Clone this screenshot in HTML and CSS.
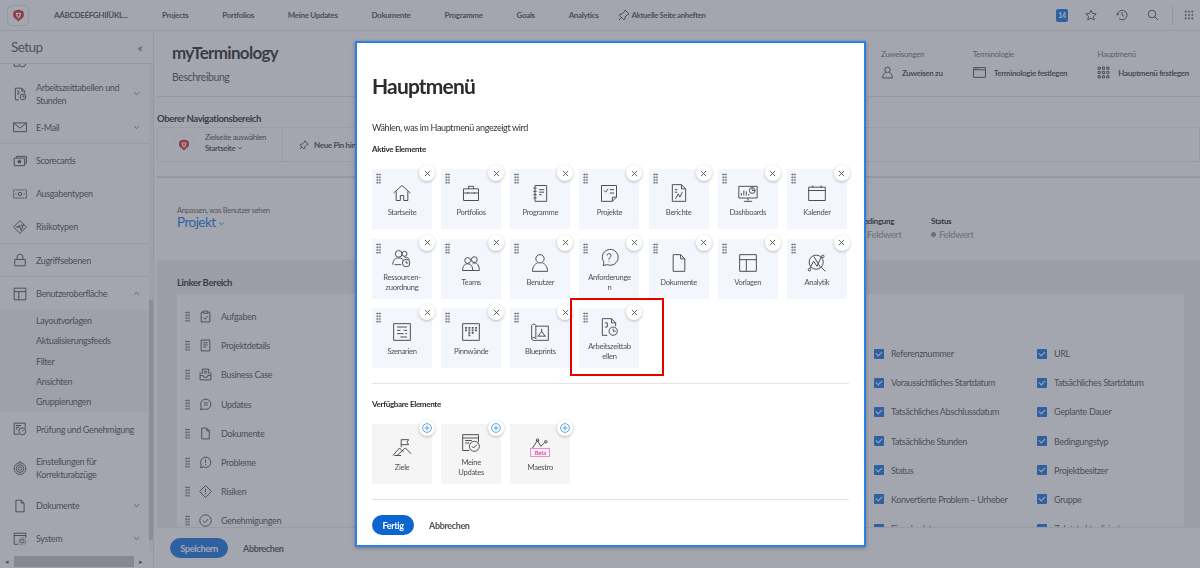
FILE: index.html
```html
<!DOCTYPE html>
<html lang="de">
<head>
    <meta charset="UTF-8">
    <meta name="viewport" content="width=device-width, initial-scale=1.0">
    <title>myTerminology</title>
    <link rel="stylesheet" href="styles.css">
</head>
<body>
    <svg class="defs" aria-hidden="true">
        <symbol id="i-logo" viewBox="0 0 24 24"><path fill="#e0242c" stroke="none" d="M12 1l9 3 1 7c0 4-3 6-6 8l-4 4-4-4c-3-2-6-4-6-8l1-7z"/><path fill="#fff" stroke="none" d="M7 7h10l-1 6-4 5-4-5z"/><path fill="#e0242c" stroke="none" d="M10 9h4l-1 5h-2z"/></symbol>
        <symbol id="i-home" viewBox="0 0 24 24"><path d="M2 12L12 3l10 9M5 10v11h5v-6h4v6h5V10"/></symbol>
        <symbol id="i-case" viewBox="0 0 24 24"><path d="M3 7h18v14H3zM9 7V4h6v3M3 12h18M8 11v2M16 11v2"/></symbol>
        <symbol id="i-book" viewBox="0 0 24 24"><path d="M6 3h14v19H6zM4 6h4M4 10h4M4 14h4M4 18h4M11 8h6M11 11h6M11 14h3"/></symbol>
        <symbol id="i-check" viewBox="0 0 24 24"><path d="M3 3h18v14l-5 5H3zM16 22v-5h5M6 9l2 2 3-4M13 8h5M13 12h5"/></symbol>
        <symbol id="i-report" viewBox="0 0 24 24"><path d="M4 2h11l5 5v15H4zM15 2v5h5M7 8h3M7 11h3M8 19l3-6 2 4 3-6"/></symbol>
        <symbol id="i-dash" viewBox="0 0 24 24"><path d="M1 4h22v14H1zM12 18v3M7 22h10M4 15v-3M7 15V9M10 15v-5M13 15v-2"/><circle cx="17" cy="9" r="3.5"/><path d="M17 9V5.500M17 9h3.500"/></symbol>
        <symbol id="i-cal" viewBox="0 0 24 24"><path d="M2 5h20v16H2zM2 9h20M7 3v3M17 3v3"/></symbol>
        <symbol id="i-res" viewBox="0 0 24 24"><circle cx="8" cy="7" r="4"/><circle cx="15" cy="7" r="3"/><path d="M1 20c0-6 3-8 7-8s5 1 5 3M3 20h8M15 11c3 0 5 1 6 3"/><circle cx="17" cy="18" r="4.500"/><path d="M17 15.500V18h2.500"/></symbol>
        <symbol id="i-teams" viewBox="0 0 24 24"><circle cx="8" cy="9" r="3.500"/><circle cx="16" cy="8" r="3.500"/><path d="M2 21c0-5 2-8 6-8s6 3 6 8zM14 13c1-1 1-1 2-1 4 0 6 3 6 9h-8"/></symbol>
        <symbol id="i-user" viewBox="0 0 24 24"><circle cx="12" cy="7" r="5"/><path d="M3 22c0-6 3-9 6-10M21 22c0-6-3-9-6-10M3 22h18"/></symbol>
        <symbol id="i-ask" viewBox="0 0 24 24"><path d="M5 21l1-4a9.500 9.500 0 1 1 4 3z"/><path d="M9.500 9a2.500 2.500 0 1 1 3.500 2.500c-1 .5-1 1-1 2.500M12 16v1"/></symbol>
        <symbol id="i-doc" viewBox="0 0 24 24"><path d="M5 2h9l5 5v15H5zM14 2v5h5"/></symbol>
        <symbol id="i-tpl" viewBox="0 0 24 24"><path d="M2 2h20v20H2zM2 8h20M10 8v14"/></symbol>
        <symbol id="i-ana" viewBox="0 0 24 24"><circle cx="11" cy="11" r="8.500"/><path d="M17 17l5 5M3 19l5-9 4 6 5-11"/><circle cx="3" cy="20" r="1.500"/><circle cx="19" cy="4" r="1.500"/><path d="M8 4l8 13"/></symbol>
        <symbol id="i-scn" viewBox="0 0 24 24"><path d="M2 2h20v20H2zM6 6h12M14 10h4M6 10h4M6 14h8M16 14h2M10 18h8"/></symbol>
        <symbol id="i-board" viewBox="0 0 24 24"><path d="M2 2h20v20H2z"/><path stroke-width="2.200" stroke-dasharray="2 1" d="M6 6v5M10 6v11M14 6v8M18 6v5"/></symbol>
        <symbol id="i-blue" viewBox="0 0 24 24"><path d="M2 4c1-2 4-2 5 0v16c-1-2-4-2-5 0zM7 5h15v17H5c-2 0-3-1-3-2M14 8v3M14 11l-4 6M14 11l4 6M9 17h10"/></symbol>
        <symbol id="i-time" viewBox="0 0 24 24"><path d="M4 2h11l5 5v4M15 2v5h5M10 22H4V2M7 7h3v5H7"/><circle cx="17" cy="17" r="5"/><path d="M17 14v3h3"/></symbol>
        <symbol id="i-goal" viewBox="0 0 24 24"><path d="M11 11V2h9l-2 3 2 3h-9M1 21l8-9 5 5M6 21l10-9 7 7M3 21h8"/></symbol>
        <symbol id="i-upd" viewBox="0 0 24 24"><path d="M10 21H2V2h19v9M2 6h19M5 9h8M5 12h5"/><circle cx="16" cy="16" r="6"/><path d="M13 16l2 2 4-4"/></symbol>
        <symbol id="i-mail" viewBox="0 0 24 24"><path d="M1 5h22v15H1zM1 5l11 9 11-9"/></symbol>
        <symbol id="i-score" viewBox="0 0 24 24"><path d="M6 7V4h17v12h-3M2 7h18v13H2z"/><path fill="currentColor" d="M11 10l1 2h2l-1.500 1.500.5 2-2-1-2 1 .5-2L8 12h2z"/></symbol>
        <symbol id="i-money" viewBox="0 0 24 24"><path stroke-dasharray="3 1" d="M1 5h22v14H1z"/><circle cx="12" cy="12" r="3"/><path d="M4 12h2M18 12h2"/></symbol>
        <symbol id="i-risk" viewBox="0 0 24 24"><path d="M12 1l11 11-11 11L1 12zM6 12l12-4-4 10-2-6z"/></symbol>
        <symbol id="i-lock" viewBox="0 0 24 24"><path d="M3 11h18v11H3zM7 11V7a5 5 0 0 1 10 0v4"/></symbol>
        <symbol id="i-review" viewBox="0 0 24 24"><path d="M10 21H2V2h19v8M5 6h9M5 9h6M5 12h3"/><circle cx="16" cy="16" r="6"/><path d="M16 16l3-3"/></symbol>
        <symbol id="i-target" viewBox="0 0 24 24"><circle cx="12" cy="13" r="10"/><circle cx="12" cy="13" r="6.500"/><circle cx="12" cy="13" r="3"/><path d="M12 3V0"/></symbol>
        <symbol id="i-sys" viewBox="0 0 24 24"><path d="M9 21H2V2h20v8M2 6h20"/><circle cx="16" cy="16" r="3"/><circle stroke-dasharray="2 2" cx="16" cy="16" r="6"/></symbol>
        <symbol id="i-task" viewBox="0 0 24 24"><path d="M8 4H4v18h16V4h-4M8 2h8v4H8zM8 14l3 3 5-6"/></symbol>
        <symbol id="i-det" viewBox="0 0 24 24"><path d="M4 2h16v20H4zM8 7h8M8 11h8M8 15h5"/></symbol>
        <symbol id="i-biz" viewBox="0 0 24 24"><path d="M2 8v14h20V8M2 14h6l1 3h6l1-3h6M6 11V2h12v9M9 6h6M9 9h6"/></symbol>
        <symbol id="i-chat" viewBox="0 0 24 24"><path d="M3 22l1-6a9.500 9.500 0 1 1 4 4zM9 9h7M9 13h7"/></symbol>
        <symbol id="i-issue" viewBox="0 0 24 24"><path d="M3 22l1-6a9.500 9.500 0 1 1 4 4zM12 6v7M12 15v2"/></symbol>
        <symbol id="i-warn" viewBox="0 0 24 24"><path d="M12 1l11 11-11 11L1 12zM12 7v6M12 15v2"/></symbol>
        <symbol id="i-ok" viewBox="0 0 24 24"><circle cx="12" cy="12" r="10.500"/><path d="M7 12l4 4 6-7"/></symbol>
        <symbol id="i-term" viewBox="0 0 24 24"><path d="M1 3h22v18H1zM1 7h22M4 5h2M8 5h2"/></symbol>
        <symbol id="i-grid" viewBox="0 0 24 24"><path d="M2 2h4v4H2zM10 2h4v4h-4zM18 2h4v4h-4zM2 10h4v4H2zM10 10h4v4h-4zM18 10h4v4h-4zM2 18h4v4H2zM10 18h4v4h-4zM18 18h4v4h-4z"/></symbol>
        <symbol id="i-dots" viewBox="0 0 24 24"><path fill="currentColor" stroke="none" d="M2 2h4v4H2zM10 2h4v4h-4zM18 2h4v4h-4zM2 10h4v4H2zM10 10h4v4h-4zM18 10h4v4h-4zM2 18h4v4H2zM10 18h4v4h-4zM18 18h4v4h-4z"/></symbol>
        <symbol id="i-pin" viewBox="0 0 24 24"><path d="M14 2l8 8-3 1-5 5 0 4-3 1-8-8 1-3 4 0 5-5zM7 17l-5 5"/></symbol>
        <symbol id="i-star" viewBox="0 0 24 24"><path d="M12 2l3 7 7.500.7-5.700 5 1.700 7.300-6.500-3.800L5.500 22l1.700-7.300-5.700-5L9 9z"/></symbol>
        <symbol id="i-hist" viewBox="0 0 24 24"><path d="M3 12a9.500 9.500 0 1 1 3 7M1 9l2 3 3-2M12 6v6l4 3"/></symbol>
        <symbol id="i-find" viewBox="0 0 24 24"><circle cx="10" cy="10" r="7.500"/><path d="M15.500 15.500L22 22"/></symbol>
        <symbol id="i-down" viewBox="0 0 24 24"><path d="M4 8l8 8 8-8"/></symbol>
        <symbol id="i-up" viewBox="0 0 24 24"><path d="M4 16l8-8 8 8"/></symbol>
        <symbol id="i-x" viewBox="0 0 24 24"><path d="M3 3l18 18M21 3L3 21"/></symbol>
        <symbol id="i-plus" viewBox="0 0 24 24"><circle cx="12" cy="12" r="10.500"/><path d="M12 6v12M6 12h12"/></symbol>
    </svg>

    <header class="topnav">
        <div class="logo-box"><svg class="ico ico-13"><use href="#i-logo"/></svg></div>
        <span class="nav-link nav-alpha">AÁBCDEÉFGHIÍÜKL...</span>
        <nav class="nav-links">
            <a class="nav-link">Projects</a>
            <a class="nav-link">Portfolios</a>
            <a class="nav-link">Meine Updates</a>
            <a class="nav-link">Dokumente</a>
            <a class="nav-link">Programme</a>
            <a class="nav-link">Goals</a>
            <a class="nav-link">Analytics</a>
        </nav>
        <span class="nav-pin"><svg class="ico ico-12"><use href="#i-pin"/></svg>Aktuelle Seite anheften</span>
        <div class="nav-tools">
            <span class="badge">14</span>
            <svg class="ico ico-12"><use href="#i-star"/></svg>
            <svg class="ico ico-12"><use href="#i-hist"/></svg>
            <svg class="ico ico-12"><use href="#i-find"/></svg>
            <span class="tool-sep"></span>
            <svg class="ico ico-10"><use href="#i-dots"/></svg>
        </div>
    </header>

    <div class="page">
        <aside class="sidebar">
            <div class="side-head"><span>Setup</span><span class="collapse">«</span></div>
            <div class="side-body">
                <div class="side-list">
                    <div class="side-item item-cut"><svg class="ico ico-14"><use href="#i-review"/></svg></div>
                    <div class="side-item item-tall"><svg class="ico ico-14"><use href="#i-time"/></svg><span>Arbeitszeittabellen und Stunden</span><svg class="ico ico-7 caret"><use href="#i-down"/></svg></div>
                    <div class="side-item item-line"><svg class="ico ico-14"><use href="#i-mail"/></svg><span>E-Mail</span><svg class="ico ico-7 caret"><use href="#i-down"/></svg></div>
                    <div class="side-item"><svg class="ico ico-14"><use href="#i-score"/></svg><span>Scorecards</span></div>
                    <div class="side-item"><svg class="ico ico-14"><use href="#i-money"/></svg><span>Ausgabentypen</span></div>
                    <div class="side-item item-line item-risk"><svg class="ico ico-14"><use href="#i-risk"/></svg><span>Risikotypen</span></div>
                    <div class="side-item item-line"><svg class="ico ico-14"><use href="#i-lock"/></svg><span>Zugriffsebenen</span></div>
                    <div class="side-item"><svg class="ico ico-14"><use href="#i-tpl"/></svg><span>Benutzeroberfläche</span><svg class="ico ico-7 caret"><use href="#i-up"/></svg></div>
                    <div class="side-sub">
                        <a>Layoutvorlagen</a>
                        <a>Aktualisierungsfeeds</a>
                        <a>Filter</a>
                        <a>Ansichten</a>
                        <a>Gruppierungen</a>
                    </div>
                    <div class="side-item item-review"><svg class="ico ico-14"><use href="#i-review"/></svg><span>Prüfung und Genehmigung</span></div>
                    <div class="side-item item-proof"><svg class="ico ico-14"><use href="#i-target"/></svg><span>Einstellungen für Korrekturabzüge</span></div>
                    <div class="side-item"><svg class="ico ico-14"><use href="#i-doc"/></svg><span>Dokumente</span><svg class="ico ico-7 caret"><use href="#i-down"/></svg></div>
                    <div class="side-item"><svg class="ico ico-14"><use href="#i-sys"/></svg><span>System</span><svg class="ico ico-7 caret"><use href="#i-down"/></svg></div>
                </div>
                <div class="vbar"><span class="vthumb"></span></div>
            </div>
            <div class="hbar"><span class="harrow">◂</span><span class="hthumb"></span><span class="harrow arrow-right">▸</span></div>
        </aside>

        <main class="main">
            <div class="scroll">
                <section class="head">
                    <div>
                        <h1>myTerminology</h1>
                        <p class="head-sub">Beschreibung</p>
                    </div>
                    <div class="head-actions">
                        <div class="action">
                            <span class="action-label">Zuweisungen</span>
                            <span class="action-btn"><svg class="ico ico-13"><use href="#i-user"/></svg>Zuweisen zu</span>
                        </div>
                        <div class="action">
                            <span class="action-label">Terminologie</span>
                            <span class="action-btn"><svg class="ico ico-13"><use href="#i-term"/></svg>Terminologie festlegen</span>
                        </div>
                        <div class="action">
                            <span class="action-label">Hauptmenü</span>
                            <span class="action-btn"><svg class="ico ico-13"><use href="#i-grid"/></svg>Hauptmenü festlegen</span>
                        </div>
                    </div>
                </section>

                <h2 class="top-title">Oberer Navigationsbereich</h2>
                <section class="pin-bar">
                    <div class="pin-start">
                        <div class="logo-soft"><svg class="ico ico-12"><use href="#i-logo"/></svg></div>
                        <div class="pin-text">
                            <span>Zielseite auswählen</span>
                            <b>Startseite <svg class="ico ico-6"><use href="#i-down"/></svg></b>
                        </div>
                    </div>
                    <div class="pin-add"><svg class="ico ico-10"><use href="#i-pin"/></svg>Neue Pin hinzufügen</div>
                </section>

                <section class="object-bar">
                    <div>
                        <span class="object-label">Anpassen, was Benutzer sehen</span>
                        <div class="object-name">Projekt <svg class="ico ico-7"><use href="#i-down"/></svg></div>
                    </div>
                    <div class="fields">
                        <div class="field"><b>Bedingung</b><span><i class="dot"></i>Feldwert</span></div>
                        <div class="field"><b>Status</b><span><i class="dot"></i>Feldwert</span></div>
                    </div>
                </section>

                <section class="left-area">
                    <h2>Linker Bereich</h2>
                    <div class="area-panel">
                        <ul class="area-list">
                            <li><i class="grip"></i><svg class="ico ico-13"><use href="#i-task"/></svg>Aufgaben</li>
                            <li><i class="grip"></i><svg class="ico ico-13"><use href="#i-det"/></svg>Projektdetails</li>
                            <li><i class="grip"></i><svg class="ico ico-13"><use href="#i-biz"/></svg>Business Case</li>
                            <li><i class="grip"></i><svg class="ico ico-13"><use href="#i-chat"/></svg>Updates</li>
                            <li><i class="grip"></i><svg class="ico ico-13"><use href="#i-doc"/></svg>Dokumente</li>
                            <li><i class="grip"></i><svg class="ico ico-13"><use href="#i-issue"/></svg>Probleme</li>
                            <li><i class="grip"></i><svg class="ico ico-13"><use href="#i-warn"/></svg>Risiken</li>
                            <li><i class="grip"></i><svg class="ico ico-13"><use href="#i-ok"/></svg>Genehmigungen</li>
                        </ul>
                        <div class="check-grid">
                            <label><i class="box"></i>Referenznummer</label>
                            <label><i class="box"></i>URL</label>
                            <label><i class="box"></i>Voraussichtliches Startdatum</label>
                            <label><i class="box"></i>Tatsächliches Startdatum</label>
                            <label><i class="box"></i>Tatsächliches Abschlussdatum</label>
                            <label><i class="box"></i>Geplante Dauer</label>
                            <label><i class="box"></i>Tatsächliche Stunden</label>
                            <label><i class="box"></i>Bedingungstyp</label>
                            <label><i class="box"></i>Status</label>
                            <label><i class="box"></i>Projektbesitzer</label>
                            <label><i class="box"></i>Konvertierte Problem – Urheber</label>
                            <label><i class="box"></i>Gruppe</label>
                            <label><i class="box"></i>Eingabedatum</label>
                            <label><i class="box"></i>Zuletzt aktualisiert von</label>
                        </div>
                    </div>
                </section>
            </div>
            <footer class="save-bar">
                <button class="btn-save">Speichern</button>
                <button class="btn-link">Abbrechen</button>
            </footer>
        </main>
    </div>

    <div class="overlay">
        <div class="modal">
            <h2 class="modal-title">Hauptmenü</h2>
            <p class="modal-desc">Wählen, was im Hauptmenü angezeigt wird</p>
            <h3 class="modal-sub">Aktive Elemente</h3>
            <div class="tiles">
                <div class="tile"><i class="grip"></i><span class="tile-x"><svg class="ico ico-7"><use href="#i-x"/></svg></span><svg class="ico ico-20"><use href="#i-home"/></svg><span class="tile-name">Startseite</span></div>
                <div class="tile"><i class="grip"></i><span class="tile-x"><svg class="ico ico-7"><use href="#i-x"/></svg></span><svg class="ico ico-20"><use href="#i-case"/></svg><span class="tile-name">Portfolios</span></div>
                <div class="tile"><i class="grip"></i><span class="tile-x"><svg class="ico ico-7"><use href="#i-x"/></svg></span><svg class="ico ico-20"><use href="#i-book"/></svg><span class="tile-name">Programme</span></div>
                <div class="tile"><i class="grip"></i><span class="tile-x"><svg class="ico ico-7"><use href="#i-x"/></svg></span><svg class="ico ico-20"><use href="#i-check"/></svg><span class="tile-name">Projekte</span></div>
                <div class="tile"><i class="grip"></i><span class="tile-x"><svg class="ico ico-7"><use href="#i-x"/></svg></span><svg class="ico ico-20"><use href="#i-report"/></svg><span class="tile-name">Berichte</span></div>
                <div class="tile"><i class="grip"></i><span class="tile-x"><svg class="ico ico-7"><use href="#i-x"/></svg></span><svg class="ico ico-20"><use href="#i-dash"/></svg><span class="tile-name">Dashboards</span></div>
                <div class="tile"><i class="grip"></i><span class="tile-x"><svg class="ico ico-7"><use href="#i-x"/></svg></span><svg class="ico ico-20"><use href="#i-cal"/></svg><span class="tile-name">Kalender</span></div>

                <div class="tile"><i class="grip"></i><span class="tile-x"><svg class="ico ico-7"><use href="#i-x"/></svg></span><svg class="ico ico-20"><use href="#i-res"/></svg><span class="tile-name">Ressourcen-<br>zuordnung</span></div>
                <div class="tile"><i class="grip"></i><span class="tile-x"><svg class="ico ico-7"><use href="#i-x"/></svg></span><svg class="ico ico-20"><use href="#i-teams"/></svg><span class="tile-name">Teams</span></div>
                <div class="tile"><i class="grip"></i><span class="tile-x"><svg class="ico ico-7"><use href="#i-x"/></svg></span><svg class="ico ico-20"><use href="#i-user"/></svg><span class="tile-name">Benutzer</span></div>
                <div class="tile"><i class="grip"></i><span class="tile-x"><svg class="ico ico-7"><use href="#i-x"/></svg></span><svg class="ico ico-20"><use href="#i-ask"/></svg><span class="tile-name">Anforderunge<br>n</span></div>
                <div class="tile"><i class="grip"></i><span class="tile-x"><svg class="ico ico-7"><use href="#i-x"/></svg></span><svg class="ico ico-20"><use href="#i-doc"/></svg><span class="tile-name">Dokumente</span></div>
                <div class="tile"><i class="grip"></i><span class="tile-x"><svg class="ico ico-7"><use href="#i-x"/></svg></span><svg class="ico ico-20"><use href="#i-tpl"/></svg><span class="tile-name">Vorlagen</span></div>
                <div class="tile"><i class="grip"></i><span class="tile-x"><svg class="ico ico-7"><use href="#i-x"/></svg></span><svg class="ico ico-20"><use href="#i-ana"/></svg><span class="tile-name">Analytik</span></div>

                <div class="tile"><i class="grip"></i><span class="tile-x"><svg class="ico ico-7"><use href="#i-x"/></svg></span><svg class="ico ico-20"><use href="#i-scn"/></svg><span class="tile-name">Szenarien</span></div>
                <div class="tile"><i class="grip"></i><span class="tile-x"><svg class="ico ico-7"><use href="#i-x"/></svg></span><svg class="ico ico-20"><use href="#i-board"/></svg><span class="tile-name">Pinnwände</span></div>
                <div class="tile"><i class="grip"></i><span class="tile-x"><svg class="ico ico-7"><use href="#i-x"/></svg></span><svg class="ico ico-20"><use href="#i-blue"/></svg><span class="tile-name">Blueprints</span></div>
                <div class="tile tile-marked"><i class="grip"></i><span class="tile-x"><svg class="ico ico-7"><use href="#i-x"/></svg></span><svg class="ico ico-20"><use href="#i-time"/></svg><span class="tile-name">Arbeitszeittab<br>ellen</span></div>
            </div>
            <hr class="modal-line">
            <h3 class="modal-sub sub-free">Verfügbare Elemente</h3>
            <div class="tiles">
                <div class="tile tile-free"><span class="tile-x"><svg class="ico ico-10 plus"><use href="#i-plus"/></svg></span><svg class="ico ico-20"><use href="#i-goal"/></svg><span class="tile-name">Ziele</span></div>
                <div class="tile tile-free"><span class="tile-x"><svg class="ico ico-10 plus"><use href="#i-plus"/></svg></span><svg class="ico ico-20"><use href="#i-upd"/></svg><span class="tile-name">Meine<br>Updates</span></div>
                <div class="tile tile-free"><span class="tile-x"><svg class="ico ico-10 plus"><use href="#i-plus"/></svg></span>
                    <div class="maestro"><svg class="ico maestro-ico" viewBox="0 0 24 12"><path d="M3 12l6-9 4 7 5-5"/><circle cx="9" cy="2.500" r="1.500"/><circle cx="19" cy="4.500" r="1.500"/></svg><span class="beta">Beta</span></div>
                    <span class="tile-name">Maestro</span></div>
            </div>
            <hr class="modal-line">
            <div class="modal-foot">
                <button class="btn-done">Fertig</button>
                <button class="btn-link">Abbrechen</button>
            </div>
        </div>
    </div>
</body>
</html>
```

FILE: styles.css
```css
*, *::after {
    box-sizing: border-box;
}

/* Lato runs wide next to the original face, so pull every text in a bit */
* {
    letter-spacing: -0.04em;
}

html, body {
    margin: 0;
    height: 100%;
    overflow: hidden;
}

body {
    font-family: Lato, "Open Sans", sans-serif;
    color: #4b4b4b;
    background: #fff;
    display: flex;
    flex-direction: column;
}

h1, h2, h3, p, ul {
    margin: 0;
    padding: 0;
}

i {
    font-style: normal;
}

.defs {
    display: none;
}

.ico {
    fill: none;
    stroke: currentColor;
    flex: none;
}

.ico-6 { width: 6px; height: 6px; stroke-width: 3.500; }
.ico-7 { width: 7px; height: 7px; stroke-width: 3; }
.ico-10 { width: 10px; height: 10px; stroke-width: 2.200; }
.ico-12 { width: 12px; height: 12px; stroke-width: 2; }
.ico-13 { width: 13px; height: 13px; stroke-width: 1.800; }
.ico-14 { width: 14px; height: 14px; stroke-width: 1.700; }
.ico-20 { width: 20px; height: 20px; stroke-width: 1.200; }

/* top navigation */
.topnav {
    height: 31px;
    flex: none;
    display: flex;
    align-items: center;
    padding-left: 8px;
    background: #fff;
    border-bottom: 1px solid #e4e4e4;
}

.logo-box {
    width: 20px;
    height: 19px;
    display: flex;
    align-items: center;
    justify-content: center;
    border-radius: 4px;
    box-shadow: 0 0 2px rgba(0, 0, 0, 0.4);
}

.nav-link {
    font-size: 8px;
    font-weight: 700;
    color: #505050;
}

.nav-alpha {
    width: 108px;
    margin-left: 26px;
}

.nav-links {
    display: flex;
    gap: 33.800px;
}

.nav-pin {
    display: flex;
    align-items: center;
    gap: 1px;
    margin-left: 20px;
    font-size: 7.800px;
    font-weight: 700;
    color: #505050;
}

.nav-tools {
    margin-left: auto;
    display: flex;
    align-items: center;
    gap: 19px;
    padding-right: 6px;
    color: #555;
}

.badge {
    width: 12px;
    height: 13px;
    margin-right: -2px;
    border-radius: 2px;
    background: #1473e6;
    color: #fff;
    font-size: 7px;
    font-weight: 700;
    text-align: center;
    line-height: 13px;
}

.tool-sep {
    width: 1px;
    height: 20px;
    margin: 0 -8px 0 -6px;
    background: #e1e1e1;
}

.page {
    flex: 1;
    min-height: 0;
    display: flex;
}

/* setup sidebar */
.sidebar {
    width: 154px;
    flex: none;
    display: flex;
    flex-direction: column;
    background: #fff;
    border-right: 1px solid #e4e4e4;
}

.side-head {
    height: 33px;
    flex: none;
    display: flex;
    justify-content: space-between;
    align-items: center;
    padding: 0 11px 0 11px;
    font-size: 13.500px;
    color: #555;
    border-bottom: 1px solid #e4e4e4;
}

.collapse {
    font-size: 11px;
}

.side-body {
    flex: 1;
    min-height: 0;
    display: flex;
}

.side-list {
    flex: 1;
    min-width: 0;
    overflow: hidden;
}

.side-item {
    height: 33px;
    display: flex;
    align-items: center;
    gap: 9px;
    padding: 0 9px 0 13px;
    font-size: 9px;
    line-height: 13px;
    color: #505050;
}

.side-item span {
    flex: 1;
}

.caret {
    color: #666;
}

.item-cut {
    height: 12px;
    padding-bottom: 8px;
    align-items: flex-end;
    overflow: hidden;
}

.item-tall {
    height: 35px;
}

.item-line {
    border-bottom: 1px solid #e8e8e8;
}

.item-risk {
    height: 34px;
}

.side-sub {
    height: 102px;
    padding-top: 1px;
    background: #f4f4f4;
}

.side-sub a {
    display: block;
    height: 20.300px;
    padding-left: 36px;
    font-size: 9px;
    line-height: 20px;
    color: #505050;
}

.item-review {
    height: 34px;
}

.item-proof {
    height: 43px;
}

.vbar {
    width: 4px;
    flex: none;
    padding-top: 236px;
    background: #f6f6f6;
}

.vthumb {
    display: block;
    height: 240px;
    background: #cfcfcf;
}

.hbar {
    height: 16px;
    flex: none;
    display: flex;
    align-items: flex-end;
    padding-bottom: 1px;
    font-size: 7px;
    line-height: 11px;
    color: #555;
}

.harrow {
    width: 14px;
    text-align: center;
}

.hthumb {
    width: 120px;
    height: 11px;
    background: #c4c4c4;
}

/* main area */
.main {
    flex: 1;
    min-width: 0;
    display: flex;
    flex-direction: column;
    padding-left: 3px;
}

.scroll {
    flex: 1;
    min-height: 0;
    overflow: hidden;
}

.head {
    height: 66px;
    display: flex;
    justify-content: space-between;
    padding: 12px 11px 0 15px;
    border-bottom: 1px solid #e4e4e4;
}

.head h1 {
    font-size: 17px;
    line-height: 20px;
    font-weight: 700;
    color: #2c2c2c;
}

.head-sub {
    margin-top: 7px;
    font-size: 10.500px;
    line-height: 14px;
    color: #505050;
}

.head-actions {
    display: flex;
    gap: 30px;
}

.action {
    display: flex;
    flex-direction: column;
    gap: 7px;
    padding-top: 6px;
}

.action-label {
    font-size: 8px;
    line-height: 10px;
    color: #707070;
}

.action-btn {
    display: flex;
    align-items: center;
    gap: 8px;
    font-size: 8px;
    font-weight: 700;
    color: #4b4b4b;
}

.top-title {
    margin-top: 15px;
    font-size: 9.500px;
    line-height: 14px;
    font-weight: 700;
    color: #2c2c2c;
}

.pin-bar {
    height: 35px;
    margin-top: 1px;
    display: flex;
    align-items: stretch;
    border: 1px solid #ededed;
    border-radius: 3px 0 0 3px;
    background: #fff;
}

.pin-start {
    width: 125px;
    display: flex;
    align-items: center;
    gap: 12px;
    padding-left: 17px;
    border-right: 1px solid #ededed;
}

.logo-soft {
    width: 18px;
    height: 19px;
    display: flex;
    align-items: center;
    justify-content: center;
    border-radius: 3px;
    box-shadow: 0 0 1px rgba(0, 0, 0, 0.25);
}

.pin-text {
    display: flex;
    flex-direction: column;
    gap: 2px;
    padding-bottom: 4px;
    font-size: 7.800px;
    line-height: 9px;
}

.pin-text b {
    color: #505050;
}

.pin-add {
    display: flex;
    align-items: center;
    gap: 5px;
    padding-left: 16px;
    font-size: 8px;
    font-weight: 700;
}

.object-bar {
    height: 84px;
    margin-top: 14px;
    display: flex;
    justify-content: space-between;
    align-items: center;
    padding: 0 0 2px 20px;
    border-top: 2px solid #e0e0e0;
    background: #fff;
}

.object-label {
    display: block;
    font-size: 7.500px;
    line-height: 9px;
    color: #606060;
}

.object-name {
    font-size: 13.500px;
    line-height: 15px;
    color: #1473e6;
}

.fields {
    display: grid;
    grid-template-columns: 72px 1fr;
    width: 341px;
    font-size: 8px;
    padding-top: 19px;
}

.field {
    display: flex;
    flex-direction: column;
    gap: 3px;
}

.field b {
    color: #2c2c2c;
}

.field span {
    font-size: 9.500px;
    font-weight: 700;
    color: #a9a9a9;
}

.dot {
    display: inline-block;
    width: 5px;
    height: 5px;
    margin-right: 3px;
    border-radius: 50%;
    background: #909090;
    vertical-align: 1px;
}

.left-area {
    background: #eeeff0;
    padding: 17px 16px 40px 20px;
}

.left-area h2 {
    height: 17px;
    font-size: 9.500px;
    line-height: 12px;
    font-weight: 700;
    color: #2c2c2c;
}

.area-panel {
    display: flex;
    background: #fff;
    padding: 8px 0 0 8px;
}

.area-list {
    width: 689px;
    list-style: none;
}

.area-list li {
    height: 29.200px;
    display: flex;
    align-items: center;
    gap: 8px;
    font-size: 9px;
    color: #505050;
}

.grip {
    width: 5px;
    height: 11px;
    flex: none;
    margin-right: 1px;
    background-image: radial-gradient(circle, #555 0.8px, transparent 1px);
    background-size: 2.600px 2.800px;
}

.area-list .ico {
    margin-right: 1px;
}

.check-grid {
    display: grid;
    grid-template-columns: 163px 140px;
    grid-auto-rows: 29.170px;
    padding-top: 37px;
    font-size: 9px;
}

.check-grid label {
    display: flex;
    align-items: center;
    gap: 7px;
    color: #505050;
    white-space: nowrap;
}

.box {
    position: relative;
    width: 10px;
    height: 10px;
    flex: none;
    border-radius: 1px;
    background: #1473e6;
}

.box::after {
    content: "";
    position: absolute;
    left: 2px;
    top: 2px;
    width: 6px;
    height: 4px;
    border-left: 1.200px solid #fff;
    border-bottom: 1.200px solid #fff;
    transform: rotate(-45deg);
}

.save-bar {
    height: 41px;
    flex: none;
    display: flex;
    align-items: center;
    gap: 15px;
    padding: 0 0 0 13px;
    background: #fff;
    border-top: 1px solid #e8e8e8;
}

button {
    font-family: inherit;
    border: 0;
    background: none;
    cursor: pointer;
}

.btn-save {
    width: 58px;
    height: 20px;
    border-radius: 10px;
    background: #1473e6;
    color: #fff;
    font-size: 9.300px;
    font-weight: 700;
    padding: 0;
}

.btn-link {
    padding: 0;
    font-size: 9px;
    font-weight: 700;
    color: #505050;
}

/* dim layer and dialog */
.overlay {
    position: fixed;
    inset: 0;
    padding: 41px 0 0 355px;
    background: rgba(71, 77, 93, 0.5);
}

.modal {
    width: 511px;
    height: 506px;
    padding: 29px 15px 0 15px;
    background: #fff;
    border: 2px solid #2b7fe6;
    box-shadow: 0 1px 4px rgba(0, 0, 0, 0.3);
}

.modal-title {
    font-size: 21px;
    line-height: 28px;
    font-weight: 700;
    color: #2c2c2c;
}

.modal-desc {
    margin-top: 22px;
    font-size: 9px;
    line-height: 12px;
    color: #333;
}

.modal-sub {
    margin-top: 9px;
    font-size: 8px;
    line-height: 12px;
    font-weight: 700;
    color: #2c2c2c;
}

.sub-free {
    margin-top: 14px;
}

.tiles {
    margin-top: 14px;
    display: grid;
    grid-template-columns: repeat(7, 60px);
    grid-auto-rows: 60px;
    column-gap: 9.170px;
    row-gap: 9.500px;
}

.tile {
    position: relative;
    display: flex;
    flex-direction: column;
    align-items: center;
    justify-content: center;
    gap: 4px;
    padding-top: 2px;
    background: #f3f7fd;
    color: #505050;
}

.tile-free {
    background: #f5f5f5;
}

.tile-name {
    font-size: 7.600px;
    line-height: 10px;
    text-align: center;
    color: #505050;
}

.tile .grip {
    position: absolute;
    left: 4px;
    top: 4px;
}

.tile-x {
    position: absolute;
    left: 47px;
    top: -4px;
    width: 16px;
    height: 16px;
    display: flex;
    align-items: center;
    justify-content: center;
    border-radius: 50%;
    background: #fff;
    box-shadow: 0 1px 3px rgba(0, 0, 0, 0.25);
}

.plus {
    color: #4a9be8;
}

.tile-marked::after {
    content: "";
    position: absolute;
    left: -9px;
    top: -10px;
    width: 94px;
    height: 78px;
    border: 2px solid #e60000;
}

.maestro {
    display: flex;
    flex-direction: column;
    align-items: center;
    height: 20px;
}

.maestro-ico {
    width: 20px;
    height: 10px;
    stroke-width: 1.200;
}

.beta {
    width: 20px;
    height: 9px;
    border: 1px solid #e58fd0;
    background: #fdeff8;
    color: #d4307f;
    font-size: 6px;
    line-height: 7px;
    text-align: center;
}

.modal-line {
    margin: 15px 0 0;
    border: 0;
    border-top: 1px solid #e4e4e4;
}

.modal-foot {
    margin-top: 15px;
    display: flex;
    align-items: center;
    gap: 15px;
}

.btn-done {
    width: 42px;
    height: 20px;
    border-radius: 10px;
    background: #0d66d0;
    color: #fff;
    font-size: 9px;
    font-weight: 700;
    padding: 0;
}
```
